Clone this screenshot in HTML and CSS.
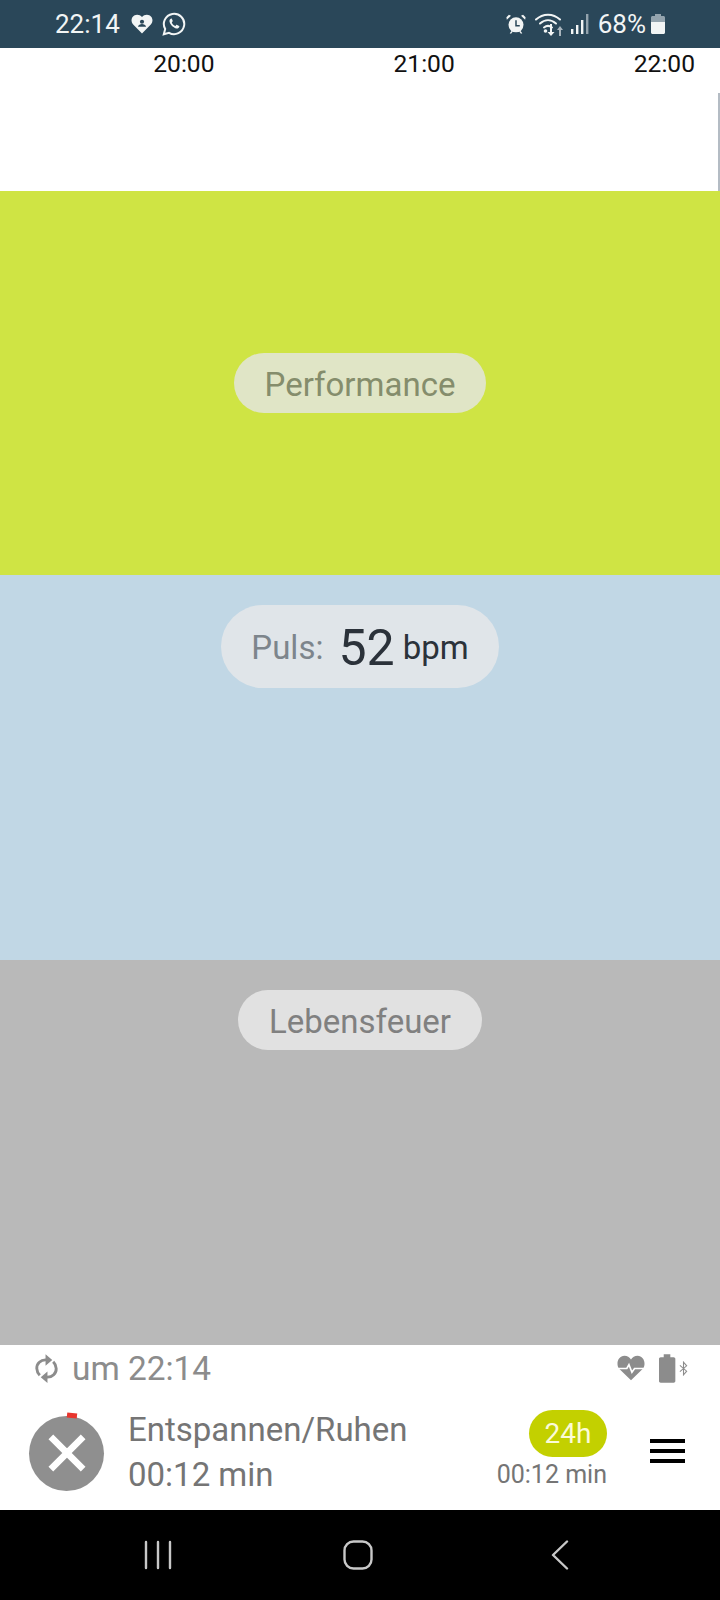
FILE: index.html
```html
<!DOCTYPE html>
<html lang="de">
<head>
    <meta charset="UTF-8">
    <meta name="viewport" content="width=device-width, initial-scale=1.0">
    <link rel="stylesheet" href="styles.css">
    <title>Lebensfeuer</title>
</head>
<body>
<div class="screen">

    <!-- statusleiste -->
    <header class="status">
        <div class="status-left">
            <span class="clock">22:14</span>
            <svg class="ic-heart" viewBox="0 0 24 22"><path fill="#f2f5f5" d="M12 21.5 2.3 11.6C-.6 8.5.1 3.6 3.4 1.6 6.300 0 9.800.6 12 3.300 14.200.6 17.700 0 20.600 1.600c3.300 2 4 6.900 1.100 10Z"/><circle cx="12" cy="8.500" r="2.300" fill="#2a4759"/><path fill="#2a4759" d="M7.500 14c.5-2 2.500-3 4.500-3s4 1 4.500 3Z"/></svg>
            <svg class="ic-whatsapp" viewBox="0 0 24 24"><path fill="none" stroke="#f2f5f5" stroke-width="2" d="M1.800 22.300 3.200 17A10.200 10.200 0 1 1 7 20.800Z"/><path fill="#f2f5f5" d="M8.800 6.700c-.9.500-1.500 1.500-1.300 2.800.4 2.900 3.900 6.500 7 7 1.300.2 2.400-.5 2.800-1.500.2-.5.100-.9-.2-1.100l-2-1c-.4-.2-.7-.1-.9.200l-.7.9c-1.700-.6-3-1.900-3.700-3.600l.7-.8c.3-.3.300-.6.100-1l-.8-1.800c-.2-.400-.6-.400-1-.100Z"/></svg>
        </div>
        <div class="status-right">
            <svg class="ic-alarm" viewBox="0 0 24 24"><circle cx="12" cy="13" r="9" fill="#f2f5f5"/><path fill="#f2f5f5" d="M1 7 6 2 3.500.8.500 3.800ZM23 7l-5-5 2.500-1.200 3 3ZM4.500 23l2.300-3 1.500 1-2.300 2.700ZM19.500 23l-2.300-3-1.500 1 2.300 2.700Z"/><path fill="none" stroke="#2a4759" stroke-width="1.800" d="M12 7.500V14h4.500"/></svg>
            <svg class="ic-wifi" viewBox="0 0 32 24"><g fill="none" stroke="#f2f5f5" stroke-width="2" stroke-linecap="round"><path d="M1 7.500C8 1 18 1 25 7.500"/><path d="M5 11.500C10 7 16 7 21 11.500"/><path d="M9 15.500c2.500-2 5.500-2 8 0"/></g><circle cx="10.500" cy="19" r="1.800" fill="#f2f5f5"/><path fill="#f2f5f5" d="M15 12h2v8h2.500L16 24l-3.500-4H15Z"/><path fill="#a9b5bd" d="M24 24v-6h-2l3-4 3 4h-2v6Z"/></svg>
            <svg class="ic-signal" viewBox="0 0 18 20"><rect x="0" y="15" width="2.400" height="5" fill="#f2f5f5"/><rect x="5" y="11" width="2.400" height="9" fill="#f2f5f5"/><rect x="10" y="6" width="2.400" height="14" fill="#f2f5f5"/><rect x="15" y="0" width="2.400" height="20" fill="#93a3ad"/></svg>
            <span class="percent">68%</span>
            <svg class="ic-battery" viewBox="0 0 14 20"><path fill="#93a3ad" d="M4 0h6v2h2.500c.8 0 1.500.7 1.500 1.500V8H0V3.500C0 2.700.7 2 1.500 2H4Z"/><path fill="#f2f5f5" d="M0 8h14v10.500c0 .8-.7 1.500-1.500 1.500h-11C.7 20 0 19.300 0 18.500Z"/></svg>
        </div>
    </header>

    <!-- zeitachse -->
    <div class="axis">
        <div class="hours">
            <span>20:00</span>
            <span>21:00</span>
            <span>22:00</span>
        </div>
        <div class="cursor"></div>
    </div>

    <section class="band band-green center">
        <div class="pill pill-green">Performance</div>
    </section>
    <section class="band band-blue">
        <div class="pill pill-blue">
            <span class="puls-label">Puls:</span>
            <span class="puls-value">52</span>
            <span class="puls-unit">bpm</span>
        </div>
    </section>
    <section class="band band-gray">
        <div class="pill pill-gray">Lebensfeuer</div>
    </section>

    <!-- unterer bereich -->
    <footer class="panel">
        <div class="sync-row">
            <div class="sync">
                <svg class="ic-sync" viewBox="0 0 24 30"><g fill="none" stroke="#8c8c8c" stroke-width="3"><path d="M5 22C1 18 .8 12 4.500 8.500 6.500 6.500 9.500 5.800 12 6"/><path d="M19 8c4 4 4.200 10 .5 13.500-2 2-5 2.700-7.500 2.500"/></g><path fill="#8c8c8c" d="M11 0 18 6 11 12ZM13 18 6 24 13 30Z"/></svg>
                <span>um 22:14</span>
            </div>
            <div class="sensors">
                <svg class="ic-pulse" viewBox="0 0 30 26"><path fill="#8c8c8c" d="M15 26 2 13.500C-1.500 8 1.500 0 8 0c3 0 5.500 1.500 7 4 1.500-2.500 4-4 7-4 6.500 0 9.500 8 6 13.500Z"/><path fill="none" stroke="#fff" stroke-width="1.800" d="M0 13.500H10.500L12.800 9.500 16 17.500 18.800 13.500H30"/></svg>
                <svg class="ic-band" viewBox="0 0 18 30"><path fill="#8c8c8c" d="M5 0h7v3h3.500c1 0 1.800.8 1.800 1.800v23.400c0 1-.8 1.800-1.800 1.800H1.800C.8 30 0 29.200 0 28.200V4.800C0 3.800.8 3 1.800 3H5Z"/></svg>
                <svg class="ic-bt" viewBox="0 0 10 16"><path fill="none" stroke="#8c8c8c" stroke-width="1.200" d="M1 4.500 8.500 11 5 15V1l3.500 4L1 11.500"/></svg>
            </div>
        </div>
        <div class="activity-row">
            <div class="stop">
                <span class="stop-mark"></span>
                <svg class="ic-x" viewBox="0 0 40 40"><path stroke="#fff" stroke-width="7" d="M3 3 37 37M37 3 3 37"/></svg>
            </div>
            <div class="activity">
                <div>Entspannen/Ruhen</div>
                <div>00:12 min</div>
            </div>
            <div class="range">
                <div class="range-pill">24h</div>
                <div class="range-time">00:12 min</div>
            </div>
            <div class="burger">
                <span></span>
                <span></span>
                <span></span>
            </div>
        </div>
    </footer>

    <!-- android navigation -->
    <nav class="navbar">
        <svg class="nav-recent" viewBox="0 0 28 30"><path fill="none" stroke="#c8c8c8" stroke-width="2.400" stroke-linecap="round" d="M2 2V28M14 2V28M26 2V28"/></svg>
        <svg class="nav-home" viewBox="0 0 30 30"><rect x="1.500" y="1.500" width="27" height="27" rx="9" fill="none" stroke="#c8c8c8" stroke-width="2.400"/></svg>
        <svg class="nav-back" viewBox="0 0 18 30"><path fill="none" stroke="#c8c8c8" stroke-width="2.400" stroke-linecap="round" stroke-linejoin="round" d="M16 1.500 2 15 16 28.500"/></svg>
    </nav>
</div>
</body>
</html>
```

FILE: styles.css
```css
* {
    box-sizing: border-box;
}

body {
    margin: 0;
    background: #fff;
    font-family: Roboto, "Liberation Sans", sans-serif;
}

.screen {
    width: 720px;
    height: 1600px;
    display: flex;
    flex-direction: column;
    overflow: hidden;
}

svg {
    display: block;
    flex: none;
}

/* statusleiste */
.status {
    height: 48px;
    background: #2a4759;
    color: #f2f5f5;
    font-size: 26px;
    display: flex;
    justify-content: space-between;
    align-items: center;
    padding: 0 55px;
}

.status-left,
.status-right {
    display: flex;
    align-items: center;
}

.ic-heart {
    width: 22px;
    height: 20px;
    margin-left: 11px;
}

.ic-whatsapp {
    width: 24px;
    height: 24px;
    margin-left: 9px;
}

.ic-alarm {
    width: 20px;
    height: 20px;
}

.ic-wifi {
    width: 32px;
    height: 24px;
    margin-left: 9px;
}

.ic-signal {
    width: 18px;
    height: 20px;
    margin-left: 4px;
}

.percent {
    margin-left: 9px;
}

.ic-battery {
    width: 14px;
    height: 20px;
    margin-left: 5px;
}

/* zeitachse */
.axis {
    height: 143px;
    position: relative;
    font-size: 24.6px;
    color: #111;
}

.hours {
    display: flex;
    justify-content: flex-end;
    gap: 179px;
    padding-right: 25px;
    line-height: 32px;
}

.cursor {
    position: absolute;
    right: 0;
    top: 45px;
    bottom: 0;
    width: 2px;
    background: #b4bcc4;
}

/* farbige bereiche */
.band {
    height: 385px;
    padding-top: 30px;
    display: flex;
    justify-content: center;
    align-items: flex-start;
}

.center {
    height: 384px;
    padding-top: 162px;
}

.band-green {
    background: #cfe444;
}

.band-blue {
    background: #c1d7e5;
}

.band-gray {
    background: #b9b9b9;
}

.pill {
    height: 60px;
    border-radius: 30px;
    font-size: 33px;
    padding-top: 2px;
    display: flex;
    align-items: center;
    justify-content: center;
}

.pill-green {
    width: 252px;
    background: #e0e5c6;
    color: #858d6c;
}

.pill-blue {
    width: 278px;
    height: 83px;
    border-radius: 42px;
    background: #e0e5e9;
}

.puls-label {
    color: #7d858c;
}

.puls-value {
    font-size: 50px;
    color: #2b323a;
    margin-left: 15px;
}

.puls-unit {
    color: #2b323a;
    margin-left: 8px;
}

.pill-gray {
    width: 244px;
    background: #e1e1e1;
    color: #808080;
}

/* unterer bereich */
.panel {
    flex: 1;
    padding: 0 35px 0 29px;
}

.sync-row {
    height: 48px;
    display: flex;
    justify-content: space-between;
    align-items: center;
    padding: 0 0 2px 6px;
}

.sync {
    display: flex;
    align-items: center;
    gap: 14px;
    font-size: 33.4px;
    color: #8c8c8c;
}

.ic-sync {
    width: 23px;
    height: 29px;
}

.sensors {
    display: flex;
    align-items: center;
    margin-right: -3px;
}

.ic-pulse {
    width: 28px;
    height: 26px;
}

.ic-band {
    width: 17px;
    height: 29px;
    margin-left: 14px;
}

.ic-bt {
    width: 9px;
    height: 15px;
    margin-left: 3px;
}

.activity-row {
    display: flex;
    align-items: center;
    height: 117px;
}

.stop {
    width: 75px;
    height: 75px;
    border-radius: 50%;
    background: #8f8f8f;
    position: relative;
    display: flex;
    align-items: center;
    justify-content: center;
    margin: 3px 0 0 0;
}

.stop-mark {
    position: absolute;
    left: 38px;
    top: -3px;
    width: 10px;
    height: 5px;
    background: #e8352e;
    transform: rotate(6deg);
}

.ic-x {
    width: 38px;
    height: 38px;
}

.activity {
    margin-left: 24px;
    font-size: 33px;
    line-height: 45px;
    color: #757575;
}

.range {
    margin: -1px 0 0 auto;
    display: flex;
    flex-direction: column;
    align-items: flex-end;
}

.range-pill {
    width: 78px;
    height: 47px;
    border-radius: 24px;
    background: #c3d000;
    color: #fbfbd8;
    font-size: 28px;
    display: flex;
    align-items: center;
    justify-content: center;
}

.range-time {
    font-size: 25px;
    line-height: 34px;
    margin-top: 1px;
    color: #757575;
}

.burger {
    width: 35px;
    margin: -2px 0 0 43px;
    display: flex;
    flex-direction: column;
    gap: 6px;
}

.burger span {
    height: 4px;
    background: #000;
}

/* android navigation */
.navbar {
    height: 90px;
    background: #000;
    display: flex;
    align-items: center;
    padding: 0 0 0 144px;
}

.nav-recent {
    width: 28px;
    height: 30px;
}

.nav-home {
    width: 30px;
    height: 30px;
    margin-left: 171px;
}

.nav-back {
    width: 18px;
    height: 30px;
    margin-left: 178px;
}
```
